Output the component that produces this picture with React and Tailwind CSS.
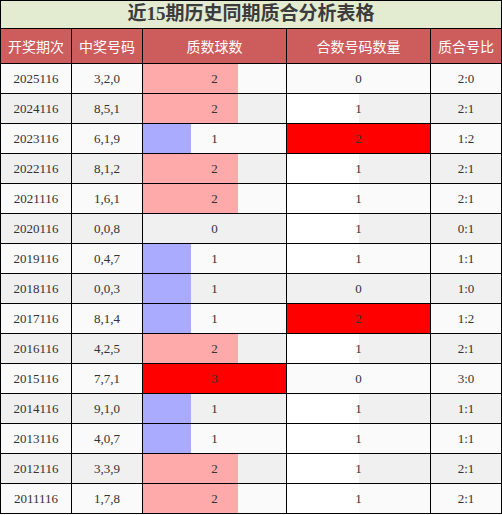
import React from "react";

const rows = [
  ["2025116", "3,2,0", 2, 0, "2:0"],
  ["2024116", "8,5,1", 2, 1, "2:1"],
  ["2023116", "6,1,9", 1, 2, "1:2"],
  ["2022116", "8,1,2", 2, 1, "2:1"],
  ["2021116", "1,6,1", 2, 1, "2:1"],
  ["2020116", "0,0,8", 0, 1, "0:1"],
  ["2019116", "0,4,7", 1, 1, "1:1"],
  ["2018116", "0,0,3", 1, 0, "1:0"],
  ["2017116", "8,1,4", 1, 2, "1:2"],
  ["2016116", "4,2,5", 2, 1, "2:1"],
  ["2015116", "7,7,1", 3, 0, "3:0"],
  ["2014116", "9,1,0", 1, 1, "1:1"],
  ["2013116", "4,0,7", 1, 1, "1:1"],
  ["2012116", "3,3,9", 2, 1, "2:1"],
  ["2011116", "1,7,8", 2, 1, "2:1"],
];

const primeColor = { 1: "#aaaaff", 2: "#ffaaaa", 3: "#ff0000" };
const compColor = { 1: "#ffffff", 2: "#ff0000" };

function BarCell({ value, max, color, bg }) {
  return (
    <div className={`relative h-[29px] ${bg}`}>
      {value > 0 && (
        <div
          className="absolute left-0 top-0 h-full"
          style={{ width: `${(value / max) * 100}%`, background: color }}
        />
      )}
      <div className="relative flex h-full items-center justify-center">{value}</div>
    </div>
  );
}

export default function App() {
  return (
    <div className="w-[502px] bg-white">
      <div
        className="grid grid-cols-[70px_70px_143px_143px_70px] gap-px bg-black p-px text-[13px] text-[#333]"
        style={{ fontFamily: '"Liberation Serif", "Noto Sans CJK SC", serif' }}
      >
        <div className="col-span-5 flex h-[27px] items-center justify-center bg-[#e3ebd0] text-[19px] font-bold text-[#3c3c3c]">
          近15期历史同期质合分析表格
        </div>
        {["开奖期次", "中奖号码", "质数球数", "合数号码数量", "质合号比"].map((h) => (
          <div
            key={h}
            className="flex h-[34px] items-center justify-center bg-[#cd5c5c] text-[14px] text-white"
            style={{ fontFamily: '"Noto Sans CJK SC", sans-serif' }}
          >
            {h}
          </div>
        ))}
        {rows.map((r, i) => {
          const bg = i % 2 === 0 ? "bg-[#fafafa]" : "bg-[#f0f0f0]";
          return (
            <React.Fragment key={r[0]}>
              <div className={`flex h-[29px] items-center justify-center ${bg}`}>{r[0]}</div>
              <div className={`flex h-[29px] items-center justify-center ${bg}`}>{r[1]}</div>
              <BarCell value={r[2]} max={3} color={primeColor[r[2]]} bg={bg} />
              <BarCell value={r[3]} max={2} color={compColor[r[3]]} bg={bg} />
              <div className={`flex h-[29px] items-center justify-center ${bg}`}>{r[4]}</div>
            </React.Fragment>
          );
        })}
      </div>
    </div>
  );
}
